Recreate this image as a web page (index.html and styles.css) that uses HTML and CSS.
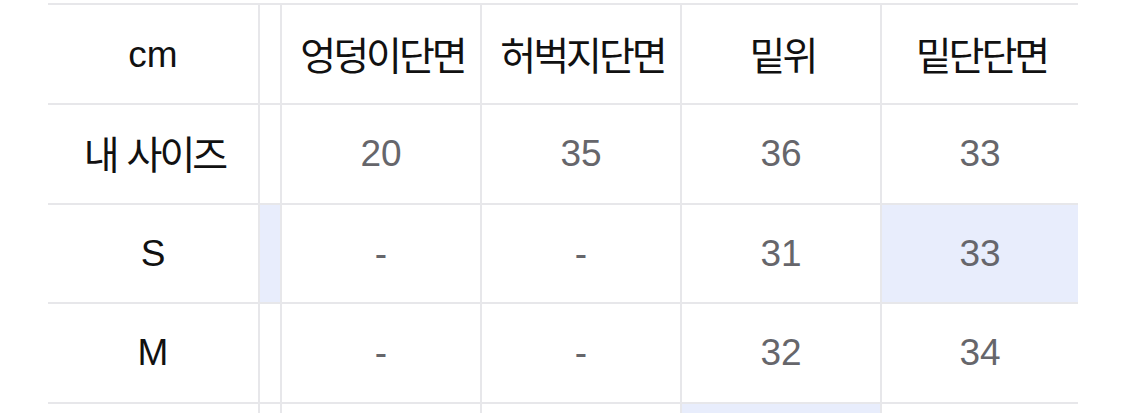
FILE: index.html
```html
<!DOCTYPE html>
<html lang="ko">
<head>
<meta charset="utf-8">
<link rel="stylesheet" href="styles.css">
</head>
<body>
<div class="size-table">
  <div class="cell head">cm</div>
  <div class="cell spacer vl"></div>
  <div class="cell head vl"><span class="ko">엉덩이단면</span></div>
  <div class="cell head vl"><span class="ko">허벅지단면</span></div>
  <div class="cell head vl"><span class="ko">밑위</span></div>
  <div class="cell head vl"><span class="ko">밑단단면</span></div>

  <div class="cell label"><span class="ko">내 사이즈</span></div>
  <div class="cell spacer vl"></div>
  <div class="cell num vl">20</div>
  <div class="cell num vl">35</div>
  <div class="cell num vl">36</div>
  <div class="cell num vl">33</div>

  <div class="cell label">S</div>
  <div class="cell spacer vl hl"></div>
  <div class="cell num vl">-</div>
  <div class="cell num vl">-</div>
  <div class="cell num vl">31</div>
  <div class="cell num vl hl">33</div>

  <div class="cell label">M</div>
  <div class="cell spacer vl"></div>
  <div class="cell num vl">-</div>
  <div class="cell num vl">-</div>
  <div class="cell num vl">32</div>
  <div class="cell num vl">34</div>

  <div class="cell label"></div>
  <div class="cell spacer vl"></div>
  <div class="cell num vl"></div>
  <div class="cell num vl"></div>
  <div class="cell num vl hl"></div>
  <div class="cell num vl"></div>
</div>
</body>
</html>
```
FILE: styles.css
```css
html, body {
  margin: 0;
  padding: 0;
  background: #ffffff;
  overflow: hidden;
}

body {
  padding-top: 3px;
  font-family: "Liberation Sans", "Noto Sans CJK KR", sans-serif;
}

.size-table {
  display: grid;
  grid-template-columns: 210px 22px 200px 200px 200px 198px;
  grid-auto-rows: 99.6px;
  grid-template-rows: 100px;
  width: 1030px;
  margin-left: 48px;
  border-top: 2px solid #e7e7ea;
}

.cell {
  box-sizing: border-box;
  display: flex;
  align-items: center;
  justify-content: center;
  border-bottom: 2px solid #e7e7ea;
  font-size: 37px;
  line-height: 1;
  white-space: nowrap;
}

.vl {
  border-left: 2px solid #e7e7ea;
}

.head,
.label {
  color: #111111;
}

.num {
  color: #66666b;
}

.hl {
  background: #e8edfc;
}

.ko {
  font-family: "Noto Sans CJK KR", sans-serif;
  font-size: 39px;
  letter-spacing: -3px;
  word-spacing: 2px;
  margin-right: -3px;
  position: relative;
  top: -1px;
}
```
